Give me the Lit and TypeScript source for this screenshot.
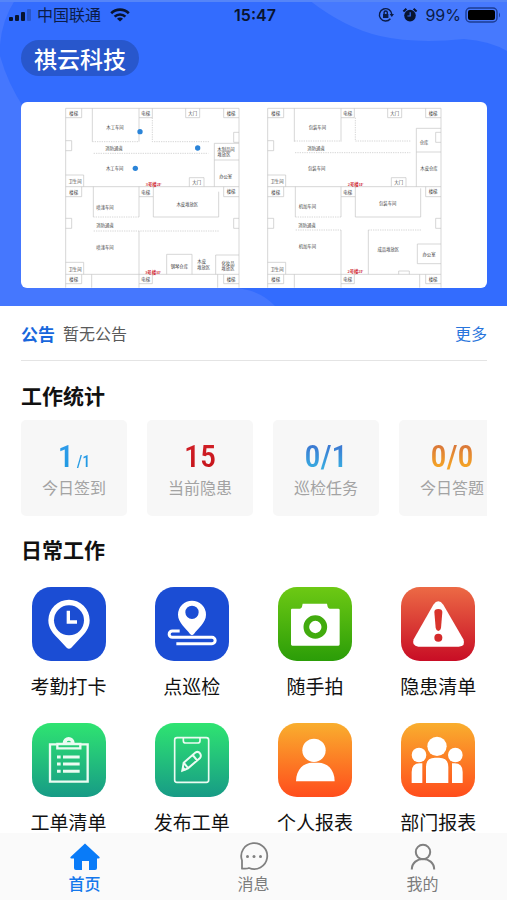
import { LitElement, html, svg, css } from "lit";
import { customElement, property } from "lit/decorators.js";

type Label = [number, number, string];

interface Plan {
  outline: string;
  dashed: string;
  labels: Label[];
  floors: Label[];
  dots: [number, number][];
}

const SHARED_WALLS =
  "M152 578V40H672V578M152 275H672M152 538H672" +
  "M152 68H200V40M372 40V68H412V40M626 40V68H672" +
  "M152 137H170V167H152M672 112H656V142H672" +
  "M152 240H206V275M152 305H200V275M372 275V305H415V275M626 275V305H672" +
  "M152 370H170V400H152M672 370H656V400H672M152 502H206V538" +
  "M152 566H200V538M372 538V566H412V538M626 538V566H672";

const SHARED_LABELS: Label[] = [
  [176, 54, "楼梯"], [392, 55, "电梯"], [533, 55, "大门"], [648, 54, "楼梯"],
  [180, 260, "卫生间"], [176, 291, "楼梯"], [392, 291, "电梯"], [648, 290, "楼梯"],
  [545, 263, "大门"], [180, 523, "卫生间"], [176, 552, "楼梯"], [392, 552, "电梯"],
  [648, 552, "楼梯"], [297, 159, "消防通道"], [270, 390, "消防通道"],
];

const PLANS: Plan[] = [
  {
    outline:
      "M232 40V140M372 68V140M512 40V68H554V40M598 145H672M598 145V275M598 195H672" +
      "M523 275V248H567V275M235 275V366M372 305V366M415 305V366H611V290" +
      "M372 408V538M455 538V478H531V538M602 538V480H672M230 538V578M372 566V578M608 538V578",
    dashed: "M232 140H372M412 68V140H585M236 175H580M235 366H372M236 408H611",
    labels: [
      [300, 97, "木工车间"], [299, 220, "木工车间"], [633, 162, "木制品间"],
      [627, 178, "堆放区"], [632, 243, "办公室"], [270, 336, "喷漆车间"],
      [517, 327, "木皮堆放区"], [270, 456, "喷漆车间"], [493, 513, "钢琴仓库"],
      [560, 500, "木皮"], [566, 517, "堆放区"], [639, 504, "化妆品"], [639, 520, "堆放区"],
    ],
    floors: [[416, 268, "3号楼2F"], [414, 531, "3号楼3F"]],
    dots: [[375, 110], [548, 159], [361, 220]],
  },
  {
    outline:
      "M232 40V140M372 68V140M512 40V68H554V40M598 100H672M598 100V275M598 171H672" +
      "M523 275V248H567V275M235 275V366M372 305V366M415 305V366H611V280" +
      "M372 405V538M454 538V405M672 447H601V506H672M232 538V578M372 566V578M608 538V578" +
      "M545 538V528H577V538",
    dashed: "M232 138H372M415 68V138H580M234 173H580M235 366H372M236 405H372M454 405H612",
    labels: [
      [301, 96, "包装车间"], [299, 219, "包装车间"], [621, 141, "仓库"],
      [636, 219, "木皮仓库"], [271, 334, "机加车间"], [512, 325, "包装车间"],
      [271, 455, "机加车间"], [514, 463, "成品堆放区"], [636, 479, "办公室"],
    ],
    floors: [[416, 267, "2号楼1F"], [415, 529, "2号楼2F"]],
    dots: [],
  },
];

const drawPlan = (p: Plan, shift: number) => svg`
  <g transform="translate(${shift} 0)">
    <path class="wall" d=${SHARED_WALLS + p.outline}></path>
    <path class="wall dash" d=${p.dashed}></path>
    ${[...SHARED_LABELS, ...p.labels].map(([x, y, t]) => svg`<text x=${x} y=${y + 5}>${t}</text>`)}
    ${p.floors.map(([x, y, t]) => svg`<text class="floor" x=${x} y=${y + 5}>${t}</text>`)}
    ${p.dots.map(([x, y]) => svg`<circle class="dot" cx=${x} cy=${y} r="8"></circle>`)}
  </g>`;

@customElement("floor-plan")
class FloorPlan extends LitElement {
  static styles = css`
    :host { display: block; background: #fff; border-radius: 6px; overflow: hidden; }
    .plan { display: block; width: 100%; }
    .wall { fill: none; stroke: #c2c2c2; stroke-width: 2; }
    .dash { stroke-dasharray: 4 3; }
    text { font-family: "Liberation Serif", "Noto Sans CJK SC", serif; font-size: 13px; fill: #444; text-anchor: middle; }
    .floor { fill: #d02b35; font-weight: 700; }
    .dot { fill: #2b84d8; }
  `;
  render() {
    return html`<svg class="plan" viewBox="18 21 1398 558" role="img" aria-label="楼层平面图">
      ${drawPlan(PLANS[0], 0)}${drawPlan(PLANS[1], 606)}
    </svg>`;
  }
}

@customElement("status-bar")
class StatusBar extends LitElement {
  static styles = css`
    :host {
      display: grid; grid-template-columns: 1fr auto 1fr; align-items: center; height: 28px; box-sizing: border-box;
      padding: 2px 6px 0 9px; color: #0b1c48; font: 16px/20px Inter, "Noto Sans CJK SC", sans-serif;
    }
    .side { display: flex; align-items: center; }
    .right { justify-content: flex-end; }
    .bars { width: 24px; height: 14px; margin-right: 4px; }
    .wifi { width: 20px; height: 14px; margin-left: 9px; }
    .time { font-weight: 600; color: #081430; }
    .lock { width: 16px; height: 16px; margin-right: 8px; }
    .alarm { width: 16px; height: 16px; margin-right: 7px; }
    .battery { width: 36px; height: 16px; margin-left: 4px; }
  `;
  render() {
    return html`
      <div class="side">
        <svg class="bars" viewBox="0 0 24 14" fill="#081430">
          <rect x="0" y="9" width="4" height="4" rx="1" /><rect x="6" y="7" width="4" height="6" rx="1" />
          <rect x="12" y="4" width="4" height="9" rx="1" /><rect x="18" y="1" width="4" height="12" rx="1" opacity=".25" />
        </svg>
        <span>中国联通</span>
        <svg class="wifi" viewBox="0 0 20 14" fill="none" stroke="#081430" stroke-width="2.6">
          <path d="M1.2 5.2a12.6 12.6 0 0 1 17.6 0M4.6 8.6a7.8 7.8 0 0 1 10.8 0" />
          <path d="M10 13.6 7 10.8a4.2 4.2 0 0 1 6 0z" fill="#081430" stroke="none" />
        </svg>
      </div>
      <span class="time">15:47</span>
      <div class="side right">
        <svg class="lock" viewBox="0 0 16 16" fill="none" stroke="#0b1c48" stroke-width="1.4">
          <path d="M12.4 11.8A6.2 6.2 0 1 1 13.8 7.4" /><path d="M11.6 7h4.4l-2.2 3z" fill="#0b1c48" stroke="none" />
          <rect x="5" y="7" width="5.4" height="4" fill="#0b1c48" stroke="none" /><path d="M6.1 7V5.6a1.6 1.6 0 0 1 3.2 0V7" />
        </svg>
        <svg class="alarm" viewBox="0 0 16 16" fill="#081430">
          <circle cx="8" cy="8.6" r="5.8" /><path d="M1.4 4.6 4.4 1.8M14.6 4.6 11.6 1.8" stroke="#081430" stroke-width="2" />
          <path d="M8.2 5.2V9H5.4" fill="none" stroke="#336cfb" stroke-width="1.2" />
        </svg>
        <span>99%</span>
        <svg class="battery" viewBox="0 0 36 16">
          <rect x="1" y="1" width="31" height="14" rx="4" fill="none" stroke="#1c3c93" stroke-width="1.4" />
          <rect x="3" y="3" width="27" height="10" rx="2" fill="#000" /><path d="M34 5.4q2 2.6 0 5.2z" fill="#1c3c93" />
        </svg>
      </div>`;
  }
}

@customElement("stat-card")
class StatCard extends LitElement {
  @property() value = "";
  @property() suffix = "";
  @property() label = "";
  @property() tone = "";
  static styles = css`
    :host {
      display: flex; flex-direction: column; align-items: center; flex: 0 0 106px; height: 96px;
      box-sizing: border-box; padding-top: 18px; border-radius: 5px; background: #f7f7f7;
    }
    .value {
      height: 36px; font: 500 32px/36px "Roboto Condensed", "Liberation Sans Narrow", "Liberation Sans", sans-serif;
      color: transparent; background-clip: text; -webkit-background-clip: text;
    }
    .small { font-size: 16px; line-height: 20px; margin-left: 3px; }
    .sky { background-image: linear-gradient(#2e9bea 20%, #1c9ae0); }
    .red { background-image: linear-gradient(#d3222a, #c41218); }
    .blue { background-image: linear-gradient(#3c78d2 20%, #38a9e0 80%); }
    .orange { background-image: linear-gradient(#d9773a 20%, #f5a425 80%); }
    .label { margin-top: 1px; font-size: 16px; line-height: 24px; color: #a3a3a3; }
  `;
  render() {
    return html`<div class="value ${this.tone}">${this.value}${this.suffix ? html`<span class="small">${this.suffix}</span>` : ""}</div>
      <div class="label">${this.label}</div>`;
  }
}

const CLOCK = svg`
  <path fill="#fff" d="M162 75a62 62 0 0 1 62 62c0 24-14 40-30 55l-25 27q-7 6-14 0l-25-27c-16-15-30-31-30-55a62 62 0 0 1 62-62z"/>
  <circle cx="162" cy="137" r="45" fill="#1b4dd2"/>
  <path d="M160 108v34h26" fill="none" stroke="#fff" stroke-width="10"/>`;
const ROUTE = svg`
  <path fill="#fff" fill-rule="evenodd" d="M532 78a42 42 0 0 1 42 42c0 24-24 40-36 58q-6 7-12 0c-12-18-36-34-36-58a42 42 0 0 1 42-42zm0 15a20 20 0 1 0 0 40 20 20 0 0 0 0-40z"/>
  <path d="M495 169H473a9 9 0 0 0 0 19H592a9 9 0 0 1 0 19H485" fill="none" stroke="#fff" stroke-width="9"/>`;
const CAMERA = svg`
  <path fill="#fff" d="M97 102h24q5-1 6-6l2-9h73l2 9q1 5 6 6h26q4 0 4 4v103q0 4-4 4H98q-4 0-4-4V106q0-4 3-4z"/>
  <circle cx="167" cy="157" r="27" fill="none" stroke="#42ab0e" stroke-width="17"/>`;
const WARNING = svg`
  <path fill="#fff" d="M523 90q15-20 30 0l60 104q8 21-14 22H478q-21-2-14-22z"/>
  <path fill="#d8342c" d="M526 112q0-9 12-9t12 9l-4 48q-2 9-8 9t-8-9z"/><circle cx="538" cy="189" r="12" fill="#d42a2b"/>`;
const CLIPBOARD = svg`
  <g fill="none" stroke="#ebfbf2" stroke-width="7">
    <path d="M125 104H105V216H218V104H198"/><path d="M127 103H196V116H127z"/>
  </g>
  <path fill="#ebfbf2" fill-rule="evenodd" d="M143 100a18 18 0 0 1 36 0zm12-2h13a7 7 0 0 0-13 0z"/>
  <path d="M126 142h11M126 163h11M126 185h11M144 142h50M144 163h50M144 185h50" stroke="#ebfbf2" stroke-width="9"/>`;
const EDIT = svg`
  <g fill="none" stroke="#ebfbf2" stroke-width="5">
    <rect x="480" y="84" width="102" height="134" rx="7"/><path d="M506 85v8q0 7 8 7h34q8 0 8-7v-8"/>
    <path d="M503 183l4-24 36-31q8-4 13 3t0 14l-36 31zM534 136l14 17M507 159l14 17" stroke-width="6"/>
  </g>
  <path fill="#ebfbf2" d="M501 185l3-16 12 12z"/>`;
const PERSON = svg`
  <circle cx="163" cy="122" r="35" fill="#fff"/><path fill="#fff" d="M109 215c0-38 25-56 48-56h20c23 0 48 18 48 56z"/>`;
const TEAM = svg`
  <g fill="#fff"><circle cx="534" cy="110" r="29"/><circle cx="480" cy="136" r="22"/><circle cx="589" cy="136" r="22"/>
  <path d="M501 220v-48q0-28 27-28h12q28 0 28 28v48zM458 220v-33q0-26 24-26h8v59zM611 220v-33q0-26-24-26h-8v59z"/></g>`;

const TASKS = [
  { name: "考勤打卡", tone: "navy", box: "51 37 222 222", art: CLOCK },
  { name: "点巡检", tone: "navy", box: "421 37 222 222", art: ROUTE },
  { name: "随手拍", tone: "green", box: "55 37 222 222", art: CAMERA },
  { name: "隐患清单", tone: "red", box: "426 37 222 222", art: WARNING },
  { name: "工单清单", tone: "teal", box: "51 40 222 222", art: CLIPBOARD },
  { name: "发布工单", tone: "teal", box: "421 40 222 222", art: EDIT },
  { name: "个人报表", tone: "orange", box: "55 40 222 222", art: PERSON },
  { name: "部门报表", tone: "orange", box: "426 40 222 222", art: TEAM },
];

const TABS = [
  {
    name: "首页", on: true,
    art: svg`<path fill="#097bf8" d="M15 1.500L29.500 15q.6 1.500-1 1.500H27V26q0 2-2 2h-6v-9h-7v9H6q-2 0-2-2v-9.500H1.500q-1.600 0-1-1.500z"/>`,
  },
  {
    name: "消息", on: false,
    art: svg`<path fill="none" stroke="#808080" stroke-width="1.800" d="M3 26.500V18.500A13 13 0 1 1 10 26q-2 1-7 .5z"/>
      <g fill="#808080"><circle cx="8.500" cy="14.500" r="1.500"/><circle cx="15" cy="14.500" r="1.500"/><circle cx="21.500" cy="14.500" r="1.500"/></g>`,
  },
  {
    name: "我的", on: false,
    art: svg`<g fill="none" stroke="#808080" stroke-width="2"><circle cx="15" cy="10" r="7.200"/><path d="M3.800 27.500C4 13.500 26 13.500 26.200 27.500"/></g>`,
  },
];

@customElement("app-root")
class AppRoot extends LitElement {
  static styles = css`
    :host {
      display: flex; flex-direction: column; min-height: 100vh; background: #fff; color: #111;
      font-family: "Noto Sans CJK SC", sans-serif;
    }
    a { color: inherit; text-decoration: none; }
    h1, h2 { margin: 0; }
    .hero { position: relative; background: #336cfe; padding-bottom: 18px; }
    .waves { position: absolute; inset: 0; width: 100%; height: 100%; }
    .hero-body { position: relative; }
    .company {
      width: fit-content; margin: 12px 0 26px 21px; padding: 0 13px; border-radius: 18px;
      background: #2857cc; color: #fff; font-size: 23px; line-height: 36px; font-weight: 500;
    }
    .map { margin: 0 20px 0 21px; }
    .notice {
      display: flex; align-items: center; gap: 8px; margin: 0 20px 0 21px; height: 54px;
      border-bottom: 1px solid #e4e4e4; font-size: 16px;
    }
    .tag { font-size: 17px; color: #1867dc; font-weight: 700; }
    .message { flex: 1; color: #5a5a5a; }
    .more { color: #2875dc; }
    .title { margin: 0 21px; font-size: 21px; line-height: 30px; font-weight: 700; }
    .first { margin-top: 19px; }
    .stats { display: flex; gap: 20px; margin: 10px 20px 18px 21px; overflow-x: auto; scrollbar-width: none; }
    .tasks { display: grid; grid-template-columns: repeat(4, 1fr); row-gap: 26px; margin: 23px 7px 0; }
    .task { display: flex; flex-direction: column; align-items: center; gap: 14px; font-size: 19px; line-height: 22px; white-space: nowrap; }
    .tile { display: block; width: 74px; height: 74px; border-radius: 19px; }
    .navy { background: #1b4dd4; }
    .green { background: linear-gradient(#6dc914, #2b9d08); }
    .red { background: linear-gradient(#ec6a45, #c80d25); }
    .teal { background: linear-gradient(#2fe471, #179b86); }
    .orange { background: linear-gradient(#f9ae2e, #ff4d1c); }
    .tabs {
      position: sticky; bottom: 0; margin-top: auto; display: grid; grid-template-columns: repeat(3, 1fr);
      height: 67px; background: #fafafa;
    }
    .tab { display: flex; flex-direction: column; align-items: center; padding-top: 9px; font-size: 16px; line-height: 20px; color: #7c7c7c; }
    .tab-icon { width: 30px; height: 30px; margin-bottom: 1px; }
    .on { color: #1478ec; font-weight: 500; }
  `;

  render() {
    return html`
      <header class="hero">
        <svg class="waves" viewBox="0 0 507 306" preserveAspectRatio="none" aria-hidden="true">
          <path fill="#4577fe" d="M0 0H15Q2 20 0 45zM0 56Q8 84 24 108Q70 180 140 220L236 288Q260 290 275 306H0z" />
          <path fill="#4679fe" d="M309 0Q345 28 380 36T464 39Q490 41 507 51V0z" />
          <path fill="#5585f8" d="M0 0H507V2H0z" />
        </svg>
        <div class="hero-body">
          <status-bar></status-bar>
          <h1 class="company">祺云科技</h1>
          <floor-plan class="map"></floor-plan>
        </div>
      </header>
      <main>
        <div class="notice">
          <span class="tag">公告</span><span class="message">暂无公告</span><a class="more" href="#notices">更多</a>
        </div>
        <h2 class="title first">工作统计</h2>
        <div class="stats">
          <stat-card value="1" suffix="/1" label="今日签到" tone="sky"></stat-card>
          <stat-card value="15" label="当前隐患" tone="red"></stat-card>
          <stat-card value="0/1" label="巡检任务" tone="blue"></stat-card>
          <stat-card value="0/0" label="今日答题" tone="orange"></stat-card>
        </div>
        <h2 class="title">日常工作</h2>
        <div class="tasks">
          ${TASKS.map((t) => html`<a class="task" href="#task">
            <svg class="tile ${t.tone}" viewBox=${t.box} aria-hidden="true">${t.art}</svg><span>${t.name}</span>
          </a>`)}
        </div>
      </main>
      <nav class="tabs">
        ${TABS.map((t) => html`<a class="tab ${t.on ? "on" : ""}" href="#tab">
          <svg class="tab-icon" viewBox="0 0 30 30" aria-hidden="true">${t.art}</svg><span>${t.name}</span>
        </a>`)}
      </nav>`;
  }
}
